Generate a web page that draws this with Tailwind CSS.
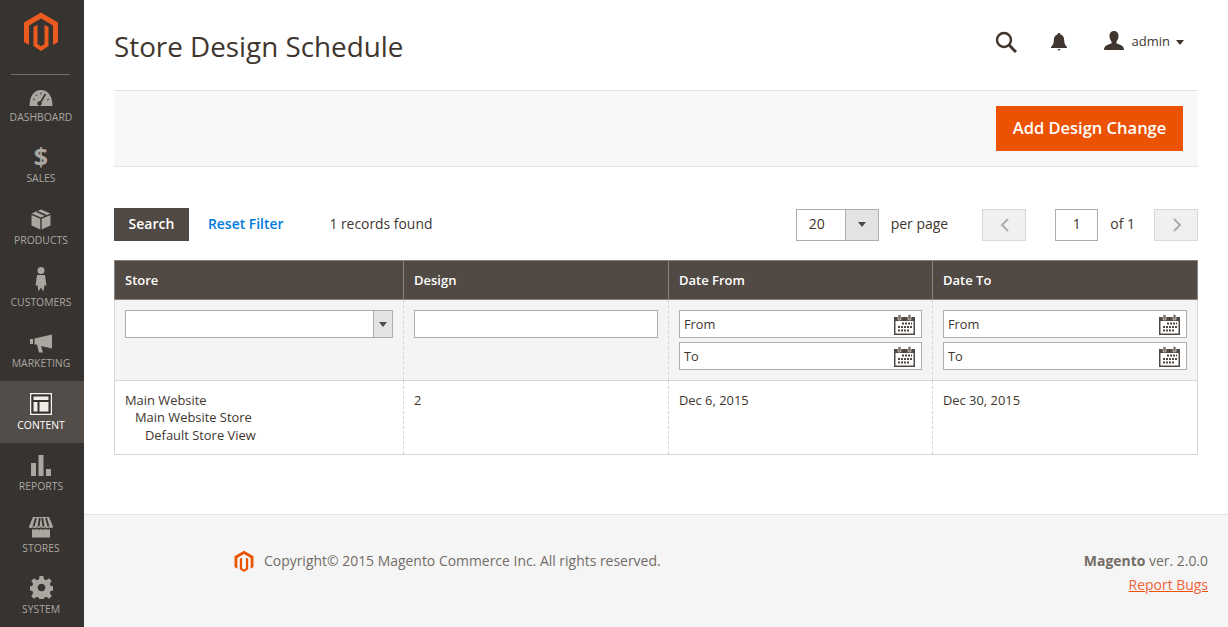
<!DOCTYPE html>
<html lang="en">
<head>
<meta charset="UTF-8">
<title>Store Design Schedule</title>
<script src="https://cdn.jsdelivr.net/npm/@tailwindcss/browser@4"></script>
</head>
<body class="font-['Open_Sans',sans-serif] text-[#41362f] text-[13.5px] bg-white">
<div class="flex h-[627px] w-[1228px] overflow-hidden">
  <!-- Sidebar -->
  <aside class="w-[84px] shrink-0 bg-[#373330] flex flex-col">
    <div class="h-[75px] ml-[11px] mr-[14px] border-b border-[#736d68] flex justify-center pt-[12px] shrink-0">
      <svg width="36" height="40" viewBox="0 0 36 40"><path fill="#eb5b20" d="M18 0.5 L35 10.5 V30 L30 33 V13.5 L18 6.5 L6 13.5 V33 L1 30 V10.5Z M18 11 L25.5 15 V34 L18 39 L10.5 34 V15 L14.5 12.8 V32 L18 34.2 L21.5 32 V12.8Z"/></svg>
    </div>
    <nav class="-mt-[1.75px] flex flex-col text-[10.4px] text-[#aaa6a0] uppercase leading-[14px] text-center">
      <a class="h-[61.57px] pr-[2px] flex flex-col items-center justify-end pb-[11px]">
        <svg class="mb-[3px]" width="24" height="18" viewBox="0 0 24 18"><path fill="#aaa6a0" d="M0.5 17 C0.5 7 5 1 12 1 C19 1 23.5 7 23.5 17Z"/><path stroke="#373330" stroke-width="1.6" d="M10.5 15 L16.5 5"/><circle cx="10.5" cy="14.5" r="2.2" fill="#373330"/><path stroke="#373330" stroke-width="1" d="M4 10 l2 1 M7 5.500 l1.300 1.500 M12 3.500 v2 M20 10 l-2 1"/></svg>
        <span>Dashboard</span>
      </a>
      <a class="h-[61.57px] pr-[2px] flex flex-col items-center justify-end pb-[11px]">
        <span class="font-bold text-[25px] leading-[27px] mb-[1px]">$</span>
        <span>Sales</span>
      </a>
      <a class="h-[61.57px] pr-[2px] flex flex-col items-center justify-end pb-[11px]">
        <svg class="mb-[3px]" width="20" height="21" viewBox="0 0 20 21"><path fill="#aaa6a0" d="M10 0.500 L19.500 4.500 L10 8.500 L0.500 4.500Z M0.500 6 L9.300 9.800 V20.500 L0.500 16.500Z M19.500 6 V16.500 L10.700 20.500 V9.800Z"/><path stroke="#373330" stroke-width="1.500" d="M6 2.500 L15 6.500"/></svg>
        <span>Products</span>
      </a>
      <a class="h-[61.57px] pr-[2px] flex flex-col items-center justify-end pb-[11px]">
        <svg class="mb-[3px]" width="12" height="25" viewBox="0 0 12 25"><circle cx="6" cy="3.500" r="3.500" fill="#aaa6a0"/><path fill="#aaa6a0" d="M2 8 H10 L11.500 19 L9.500 18 L8.500 24.500 L6 20.500 L3.500 24.500 L2.500 18 L0.500 19Z"/></svg>
        <span>Customers</span>
      </a>
      <a class="h-[61.57px] pr-[2px] flex flex-col items-center justify-end pb-[11px]">
        <svg class="mb-[3px]" width="23" height="19" viewBox="0 0 23 19"><path fill="#aaa6a0" d="M0 5 H3 V10 H0Z M4.500 4.500 L22 0.500 V14.500 L11 12 L13 18.500 H9 L7 10.500 H4.500Z"/></svg>
        <span>Marketing</span>
      </a>
      <a class="h-[61.57px] pr-[2px] flex flex-col items-center justify-end pb-[11px] bg-[#524d49] text-white">
        <svg class="mb-[3px]" width="22" height="22" viewBox="0 0 22 22"><rect x="0.750" y="0.750" width="20.500" height="20.500" fill="none" stroke="#f5f2ee" stroke-width="1.500"/><rect x="1.500" y="1.500" width="19" height="19" fill="#373330"/><path fill="#f0ece6" d="M3.500 3.500 H18.500 V7 H3.500Z M3.500 9 H7.500 V18.500 H3.500Z M9.500 9 H18.500 V18.500 H9.500Z"/></svg>
        <span>Content</span>
      </a>
      <a class="h-[61.57px] pr-[2px] flex flex-col items-center justify-end pb-[11px]">
        <svg class="mb-[3px]" width="20" height="21" viewBox="0 0 20 21"><path fill="#aaa6a0" d="M0 8 H5 V21 H0Z M7.500 0 H12.500 V21 H7.500Z M15 14 H20 V21 H15Z"/></svg>
        <span>Reports</span>
      </a>
      <a class="h-[61.57px] pr-[2px] flex flex-col items-center justify-end pb-[11px]">
        <svg class="mb-[3px]" width="24" height="21" viewBox="0 0 24 21"><path fill="#aaa6a0" d="M4 0 H20 L24 9.500 C24 11.500 21 11.500 20.500 10 C20 11.500 17 11.500 16.200 10 C15.500 11.500 13 11.500 12 10 C11 11.500 8.500 11.500 7.800 10 C7 11.500 4 11.500 3.500 10 C3 11.500 0 11.500 0 9.500Z M3 12 C5 13 6.500 12.500 7.800 12 C9 13 11 13 12 12 C13 13 15 13 16.200 12 C17.500 12.500 19 13 21 12 V20.500 H3Z"/><path stroke="#373330" stroke-width="1.800" d="M7 1 L4.500 9.500 M10.800 1 L9.500 9.500 M13.200 1 L14.500 9.500 M17 1 L19.500 9.500"/></svg>
        <span>Stores</span>
      </a>
      <a class="h-[61.57px] pr-[2px] flex flex-col items-center justify-end pb-[11px]">
        <svg class="mb-[3px]" width="23" height="23" viewBox="0 0 24 24"><path fill="#aaa6a0" fill-rule="evenodd" d="M10 0 h4 l.7 3.500 2.200 .9 3-2 2.800 2.800-2 3 .9 2.200 3.400 .6 v4 l-3.400 .7-.9 2.200 2 3-2.800 2.800-3-2-2.200 .9-.7 3.400 h-4 l-.7-3.400-2.200-.9-3 2-2.800-2.800 2-3-.9-2.200-3.400-.7 v-4 l3.400-.6 .9-2.200-2-3 2.800-2.800 3 2 2.200-.9z M12 8 a4 4 0 1 0 .01 0z"/></svg>
        <span>System</span>
      </a>
    </nav>
  </aside>

  <!-- Main -->
  <div class="flex-1 flex flex-col min-w-0">
    <div class="px-[30px] flex-1">
      <header class="h-[90px] flex items-start justify-between">
        <h1 class="text-[27.8px] font-normal leading-[38px] mt-[27px] text-[#41362f]">Store Design Schedule</h1>
        <div class="flex items-center mt-[29px] mr-[14px] h-[26px]">
          <svg class="-mt-[1px] mr-[2px]" width="22" height="22" viewBox="0 0 22 22" fill="none" stroke="#41362f" stroke-width="2.400"><circle cx="9" cy="9" r="7"/><path d="M14 14 L21 21" stroke-width="3"/></svg>
          <svg class="ml-[32px]" width="16" height="18" viewBox="0 0 16 18"><path fill="#41362f" d="M8 0 C9 0 9.500 .7 9.500 1.500 C12 2.300 13.200 4.500 13.200 7 C13.200 10.500 14 12 16 14 V15 H0 V14 C2 12 2.800 10.500 2.800 7 C2.800 4.500 4 2.300 6.500 1.500 C6.500 .7 7 0 8 0Z M6.500 16 H9.500 L8 18Z"/></svg>
          <svg class="ml-[37px] -mt-[4px]" width="20" height="19" viewBox="0 0 20 19"><path fill="#41362f" d="M10 0 C13 0 14.500 2.300 14.500 5 C14.500 7.500 13.500 9.500 12.500 10.500 V12.500 C15 13.500 20 14 20 19 H0 C0 14 5 13.500 7.500 12.500 V10.500 C6.500 9.500 5.500 7.500 5.500 5 C5.500 2.300 7 0 10 0Z"/></svg>
          <span class="ml-[8px] text-[13px]">admin</span>
          <span class="ml-[6px] w-0 h-0 border-x-[4.500px] border-x-transparent border-t-[5px] border-t-[#41362f]"></span>
        </div>
      </header>

      <div class="h-[77px] bg-[#f8f8f8] border-y border-[#e3e3e3] flex items-center justify-end pr-[15px]">
        <button class="w-[187px] h-[45px] pb-[0.5px] bg-[#eb5202] text-white text-[16.5px] font-semibold">Add Design Change</button>
      </div>

      <!-- Grid toolbar -->
      <div class="mt-[41px] h-[33px] flex items-center">
        <button class="w-[75px] h-[33px] pb-[2px] bg-[#514943] text-white text-[14px] font-semibold">Search</button>
        <a class="ml-[19px] text-[#007bdb] text-[13.9px] font-semibold">Reset Filter</a>
        <span class="ml-[46px] text-[13.9px]">1 records found</span>
        <div class="ml-auto flex items-center">
          <div class="w-[83px] h-[32px] border border-[#adadad] flex">
            <span class="flex-1 pl-[12px] leading-[28px] text-[14px]">20</span>
            <span class="w-[33px] bg-[#e3e3e3] border-l border-[#adadad] flex items-center justify-center">
              <span class="w-0 h-0 border-x-[4px] border-x-transparent border-t-[5px] border-t-[#514943]"></span>
            </span>
          </div>
          <span class="ml-[12px] -mt-[2px] text-[14px]">per page</span>
          <button class="ml-[34px] w-[44px] h-[32px] bg-[#f0f0f0] border border-[#d9d9d9] flex items-center justify-center">
            <svg class="ml-[1px]" width="9" height="14" viewBox="0 0 9 14" fill="none" stroke="#adadad" stroke-width="2"><path d="M8 1 L2 7 L8 13"/></svg>
          </button>
          <span class="ml-[29px] w-[43px] h-[32px] border border-[#adadad] text-center leading-[28px] text-[14px]">1</span>
          <span class="ml-[12px] -mt-[2px] text-[14px]">of 1</span>
          <button class="ml-[19px] w-[44px] h-[32px] bg-[#f0f0f0] border border-[#d9d9d9] flex items-center justify-center">
            <svg class="ml-[3px]" width="9" height="14" viewBox="0 0 9 14" fill="none" stroke="#adadad" stroke-width="2"><path d="M1 1 L7 7 L1 13"/></svg>
          </button>
        </div>
      </div>

      <!-- Grid -->
      <table class="mt-[19px] w-[1083px] table-fixed border-collapse text-[13px]">
        <colgroup><col class="w-[289px]"><col class="w-[265px]"><col class="w-[264px]"><col class="w-[265px]"></colgroup>
        <thead>
          <tr class="h-[39px] bg-[#514943] text-white text-[13px] font-semibold text-left">
            <th class="font-semibold px-[10px] pt-[2px] border border-[#8a837e]">Store</th>
            <th class="font-semibold px-[10px] pt-[2px] border border-[#8a837e]">Design</th>
            <th class="font-semibold px-[10px] pt-[2px] border border-[#8a837e]">Date From</th>
            <th class="font-semibold px-[10px] pt-[2px] border border-[#8a837e]">Date To</th>
          </tr>
        </thead>
        <tbody>
          <tr class="h-[81px] bg-[#f4f4f4]">
            <td class="align-top px-[10px] pt-[10px] border border-[#d6d6d6] [border-right-style:dashed]">
              <div class="w-[268px] h-[28px] bg-white border border-[#adadad] flex justify-end">
                <span class="w-[19px] bg-[#e3e3e3] border-l border-[#adadad] flex items-center justify-center">
                  <span class="w-0 h-0 border-x-[4px] border-x-transparent border-t-[5px] border-t-[#514943]"></span>
                </span>
              </div>
            </td>
            <td class="align-top px-[10px] pt-[10px] border border-[#d6d6d6] [border-left-style:dashed] [border-right-style:dashed]">
              <div class="w-[244px] h-[28px] bg-white border border-[#adadad]"></div>
            </td>
            <td class="align-top px-[10px] pt-[10px] border border-[#d6d6d6] [border-left-style:dashed] [border-right-style:dashed]">
              <div class="w-[243px] h-[28px] bg-white border border-[#adadad] flex items-center justify-between pl-[4px] pr-[6px] text-[12.8px]"><span class="mt-[2px]">From</span><svg width="21" height="21" viewBox="0 0 21 21"><path fill="#514943" d="M0 3 H21 V21 H0Z"/><rect x="1.500" y="7" width="18" height="12.500" fill="#fff"/><rect x="4" y="0.500" width="3" height="5.500" rx="1" fill="#6f6a66" stroke="#fff" stroke-width=".6"/><rect x="14" y="0.500" width="3" height="5.500" rx="1" fill="#6f6a66" stroke="#fff" stroke-width=".6"/><path stroke="#514943" stroke-width="2" stroke-dasharray="2 1" d="M8 9.500 H18 M4 13 H18 M4 16.500 H15"/></svg></div>
              <div class="mt-[4px] w-[243px] h-[28px] bg-white border border-[#adadad] flex items-center justify-between pl-[4px] pr-[6px] text-[12.8px]"><span class="mt-[2px]">To</span><svg width="21" height="21" viewBox="0 0 21 21"><path fill="#514943" d="M0 3 H21 V21 H0Z"/><rect x="1.500" y="7" width="18" height="12.500" fill="#fff"/><rect x="4" y="0.500" width="3" height="5.500" rx="1" fill="#6f6a66" stroke="#fff" stroke-width=".6"/><rect x="14" y="0.500" width="3" height="5.500" rx="1" fill="#6f6a66" stroke="#fff" stroke-width=".6"/><path stroke="#514943" stroke-width="2" stroke-dasharray="2 1" d="M8 9.500 H18 M4 13 H18 M4 16.500 H15"/></svg></div>
            </td>
            <td class="align-top px-[10px] pt-[10px] border border-[#d6d6d6] [border-left-style:dashed]">
              <div class="w-[244px] h-[28px] bg-white border border-[#adadad] flex items-center justify-between pl-[4px] pr-[6px] text-[12.8px]"><span class="mt-[2px]">From</span><svg width="21" height="21" viewBox="0 0 21 21"><path fill="#514943" d="M0 3 H21 V21 H0Z"/><rect x="1.500" y="7" width="18" height="12.500" fill="#fff"/><rect x="4" y="0.500" width="3" height="5.500" rx="1" fill="#6f6a66" stroke="#fff" stroke-width=".6"/><rect x="14" y="0.500" width="3" height="5.500" rx="1" fill="#6f6a66" stroke="#fff" stroke-width=".6"/><path stroke="#514943" stroke-width="2" stroke-dasharray="2 1" d="M8 9.500 H18 M4 13 H18 M4 16.500 H15"/></svg></div>
              <div class="mt-[4px] w-[244px] h-[28px] bg-white border border-[#adadad] flex items-center justify-between pl-[4px] pr-[6px] text-[12.8px]"><span class="mt-[2px]">To</span><svg width="21" height="21" viewBox="0 0 21 21"><path fill="#514943" d="M0 3 H21 V21 H0Z"/><rect x="1.500" y="7" width="18" height="12.500" fill="#fff"/><rect x="4" y="0.500" width="3" height="5.500" rx="1" fill="#6f6a66" stroke="#fff" stroke-width=".6"/><rect x="14" y="0.500" width="3" height="5.500" rx="1" fill="#6f6a66" stroke="#fff" stroke-width=".6"/><path stroke="#514943" stroke-width="2" stroke-dasharray="2 1" d="M8 9.500 H18 M4 13 H18 M4 16.500 H15"/></svg></div>
            </td>
          </tr>
          <tr class="h-[74px] bg-white text-[12.9px] leading-[17.5px] align-top">
            <td class="px-[10px] pt-[11px] border border-[#d6d6d6] [border-right-style:dashed]">
              <div>Main Website</div><div class="pl-[10px] -mt-[0.5px]">Main Website Store</div><div class="pl-[20px] mt-[0.5px]">Default Store View</div>
            </td>
            <td class="px-[10px] pt-[11px] border border-[#d6d6d6] [border-left-style:dashed] [border-right-style:dashed]">2</td>
            <td class="px-[10px] pt-[11px] border border-[#d6d6d6] [border-left-style:dashed] [border-right-style:dashed]">Dec 6, 2015</td>
            <td class="px-[10px] pt-[11px] border border-[#d6d6d6] [border-left-style:dashed]">Dec 30, 2015</td>
          </tr>
        </tbody>
      </table>
    </div>

    <!-- Footer -->
    <footer class="h-[113px] bg-[#f5f5f5] border-t border-[#e3e3e3] flex justify-between pl-[150px] pr-[20px] text-[13.95px] shrink-0">
      <div class="flex items-center h-[92px] text-[#736c66]">
        <svg width="20" height="23" viewBox="0 0 36 40"><path fill="#eb5202" d="M18 0.500 L35 10.500 V30 L30 33 V13.500 L18 6.500 L6 13.500 V33 L1 30 V10.500Z M18 11 L25.500 15 V34 L18 39 L10.500 34 V15 L14.500 12.800 V32 L18 34.200 L21.500 32 V12.800Z"/></svg>
        <span class="ml-[10px]">Copyright© 2015 Magento Commerce Inc. All rights reserved.</span>
      </div>
      <div class="text-right pt-[36px] text-[#736c66] leading-[20px]">
        <div><b class="font-bold">Magento</b> ver. 2.0.0</div>
        <a class="block mt-[4px] text-[#f2623a] underline decoration-[#eb5202]">Report Bugs</a>
      </div>
    </footer>
  </div>
</div>
</body>
</html>
